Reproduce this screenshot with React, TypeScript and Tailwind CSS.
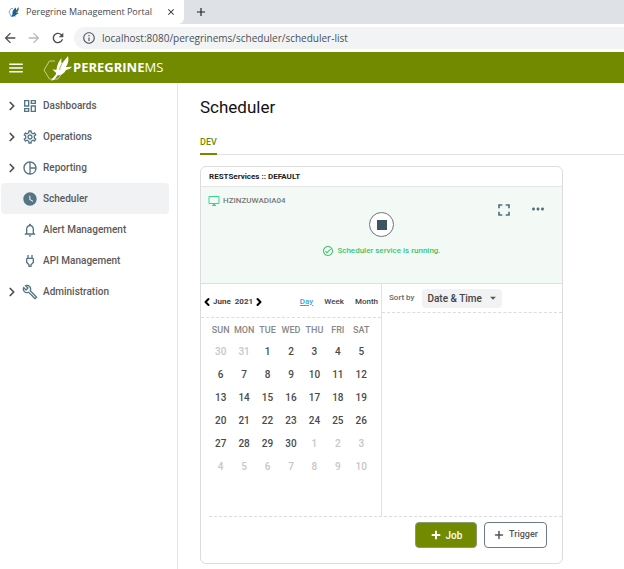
import { useState } from "react";
import type { IconType } from "react-icons";
import { ChevronLeft, ChevronRight, Plus } from "lucide-react";
import {
  MdAdd,
  MdArrowBack,
  MdArrowDropDown,
  MdArrowForward,
  MdClose,
  MdFullscreen,
  MdMenu,
  MdMoreHoriz,
  MdNotificationsNone,
  MdOutlineBuild,
  MdOutlineCheckCircle,
  MdOutlineDashboard,
  MdOutlineDesktopWindows,
  MdOutlineInfo,
  MdOutlinePieChart,
  MdOutlinePower,
  MdOutlineSettings,
  MdRefresh,
  MdWatchLater,
} from "react-icons/md";

const navItems: { label: string; icon: IconType; expandable?: boolean }[] = [
  { label: "Dashboards", icon: MdOutlineDashboard, expandable: true },
  { label: "Operations", icon: MdOutlineSettings, expandable: true },
  { label: "Reporting", icon: MdOutlinePieChart, expandable: true },
  { label: "Scheduler", icon: MdWatchLater },
  { label: "Alert Management", icon: MdNotificationsNone },
  { label: "API Management", icon: MdOutlinePower },
  { label: "Administration", icon: MdOutlineBuild, expandable: true },
];

const weekdays = ["SUN", "MON", "TUE", "WED", "THU", "FRI", "SAT"];

// June 2021 with the days around it
const weeks = [
  [30, 31, 1, 2, 3, 4, 5],
  [6, 7, 8, 9, 10, 11, 12],
  [13, 14, 15, 16, 17, 18, 19],
  [20, 21, 22, 23, 24, 25, 26],
  [27, 28, 29, 30, 1, 2, 3],
  [4, 5, 6, 7, 8, 9, 10],
];

function isOutside(week: number, day: number) {
  return (week === 0 && day > 7) || (week > 3 && day < 20);
}

function Favicon() {
  return (
    <svg viewBox="0 0 12 12" className="h-3 w-3 shrink-0">
      <path d="M5 2.5H3L1 6l2 4h5" fill="none" stroke="#7db4d8" />
      <path d="M10.5 1c.6 2.500-.2 4.500-2 6L11 7 8.500 8.500 6.500 10 3 11l1.500-2.500C4 6 5 3.500 8 1.500v3Z" fill="#1c5f96" />
      <path d="M10 3.500 8 7l1.500.3Z" fill="#8fae1b" />
    </svg>
  );
}

function Logo() {
  return (
    <svg viewBox="0 0 30 26" className="h-[26px] w-[30px] shrink-0">
      <path d="M12 6H6.500L1 15l5.500 9H15l3.500-5" fill="none" stroke="#c5d18f" />
      <path
        d="M25 1c1 4.500.2 8-2.300 11l6.300-.2c-1.500 2-3.500 2.800-6 3.200-2 4-5 5-8.500 5.500L11 25l-3 .5 3.500-4.500c1.200-1 1.700-1.800 1.500-3.200L9.500 14.500l4 .2C14 10.500 15.500 6.500 18.500 3c-.3 2.500-.2 4 .3 6C20.500 6.500 23 3.500 25 1Z"
        fill="#fff"
      />
      <path d="M18.800 9c-1.200 2-2 3.800-2.300 6" fill="none" stroke="#728a00" strokeWidth=".6" />
    </svg>
  );
}

function BrowserBar() {
  return (
    <div className="bg-white">
      <div className="flex h-6 bg-[#dee1e6]">
        <div className="flex w-[184px] items-center rounded-br-md bg-white pl-2 pr-2">
          <Favicon />
          <span className="ml-1.5 flex-1 whitespace-nowrap font-['Open_Sans'] text-[9px] text-[#45494d]">
            Peregrine Management Portal
          </span>
          <button type="button" aria-label="Close tab">
            <MdClose className="h-2.5 w-2.5 text-[#222]" />
          </button>
        </div>
        <button type="button" aria-label="New tab" className="px-2.5">
          <MdAdd className="h-3.5 w-3.5 text-[#222]" />
        </button>
      </div>
      <div className="flex h-7 items-center">
        <button type="button" aria-label="Back" className="ml-0.5">
          <MdArrowBack className="h-4 w-4 text-[#4b4f53]" />
        </button>
        <button type="button" aria-label="Forward" className="ml-2">
          <MdArrowForward className="h-4 w-4 text-[#b5b8bb]" />
        </button>
        <button type="button" aria-label="Reload" className="ml-2">
          <MdRefresh className="h-4 w-4 text-[#4b4f53]" />
        </button>
        <div className="ml-2 flex h-[22px] flex-1 items-center rounded-l-full bg-[#f1f3f4] pl-2">
          <MdOutlineInfo className="h-3.5 w-3.5 shrink-0 text-[#55595d]" />
          <input
            aria-label="Address"
            className="ml-1.5 w-full bg-transparent font-['Open_Sans'] text-[10px] text-[#4b4f54] outline-none"
            defaultValue="localhost:8080/peregrinems/scheduler/scheduler-list"
          />
        </div>
      </div>
    </div>
  );
}

function Sidebar() {
  return (
    <nav className="w-[178px] shrink-0 border-r border-[#e4e6e8] pt-[7px] pl-px pr-2">
      {navItems.map(({ label, icon: Icon, expandable }) => (
        <a
          key={label}
          href="#"
          className={
            label === "Scheduler"
              ? "flex h-[31px] items-center rounded bg-[#f1f2f3]"
              : "flex h-[31px] items-center"
          }
        >
          <span className="flex w-[21px] justify-center">
            {expandable && <ChevronRight className="h-3.5 w-3.5 text-[#4a4f53]" strokeWidth={3} />}
          </span>
          <Icon className="h-4 w-4 text-[#557585]" />
          <span className="ml-[5px] text-[10px] font-medium text-[#5a5a5a]">{label}</span>
        </a>
      ))}
    </nav>
  );
}

function ServiceStatus() {
  return (
    <div className="flex h-[97px] justify-between border-b border-[#cfe8d6] bg-[#f3faf5] px-[7px]">
      <div className="flex h-[27px] flex-1 items-center pr-2 text-[8px] font-medium text-[#777]">
        <MdOutlineDesktopWindows className="mr-[3px] h-3 w-3 text-[#36d68f]" />
        HZINZUWADIA04
      </div>
      <div className="flex flex-col items-center pt-[25px]">
        <button
          type="button"
          aria-label="Stop scheduler"
          className="flex h-[25px] w-[25px] items-center justify-center rounded-full border border-[#6b7680] bg-white"
        >
          <span className="h-2.5 w-2.5 bg-[#3c5464]" />
        </button>
        <div className="mt-2 flex items-center whitespace-nowrap text-[8px] font-medium text-[#3bc46d]">
          <MdOutlineCheckCircle className="mr-[3px] h-3 w-3" />
          Scheduler service is running.
        </div>
      </div>
      <div className="flex flex-1 items-start justify-end gap-[15px] pt-[13px] pr-2">
        <button type="button" aria-label="Full screen">
          <MdFullscreen className="h-5 w-5 text-[#50707f]" />
        </button>
        <button type="button" aria-label="More">
          <MdMoreHoriz className="h-[18px] w-[18px] text-[#50707f]" />
        </button>
      </div>
    </div>
  );
}

function Calendar() {
  const [view, setView] = useState("Day");

  return (
    <div className="w-[181px] shrink-0 border-r border-[#e2e2e2]">
      <div className="flex h-[34px] items-center border-b border-dashed border-[#dcdcdc] pt-[3px] pr-[3px] text-[8px] text-[#444]">
        <button type="button" aria-label="Previous month">
          <ChevronLeft className="h-3 w-3 text-black" strokeWidth={4} />
        </button>
        <span className="font-bold">June</span>
        <span className="ml-1 font-bold">2021</span>
        <button type="button" aria-label="Next month">
          <ChevronRight className="h-3 w-3 text-black" strokeWidth={4} />
        </button>
        <div className="ml-auto flex gap-[11px] font-medium">
          {["Day", "Week", "Month"].map((name) => (
            <button
              key={name}
              type="button"
              onClick={() => setView(name)}
              className={view === name ? "text-[#3ba3dc] underline" : ""}
            >
              {name}
            </button>
          ))}
        </div>
      </div>
      <table className="mx-2 mt-[3px] w-[164px] table-fixed text-center">
        <thead>
          <tr className="h-[19px] text-[9px] text-[#888]">
            {weekdays.map((day) => (
              <th key={day} className="p-0 font-medium">
                {day}
              </th>
            ))}
          </tr>
        </thead>
        <tbody>
          {weeks.map((week, i) => (
            <tr key={i} className="h-[23px] text-[10px] font-medium">
              {week.map((day) => (
                <td key={day} className={isOutside(i, day) ? "p-0 text-[#c6c6c6]" : "p-0 text-[#4a4a4a]"}>
                  {day}
                </td>
              ))}
            </tr>
          ))}
        </tbody>
      </table>
    </div>
  );
}

function JobList() {
  return (
    <div className="flex-1">
      <div className="flex h-[29px] items-center border-b border-dashed border-[#dcdcdc] pl-[7px]">
        <label htmlFor="sort" className="text-[8px] font-medium text-[#666]">
          Sort by
        </label>
        <div className="relative ml-2 flex items-center">
          <select
            id="sort"
            className="h-[19px] w-20 appearance-none rounded bg-[#f1f2f3] pl-[5px] text-[10px] font-medium text-[#444]"
          >
            <option>Date &amp; Time</option>
          </select>
          <MdArrowDropDown className="pointer-events-none absolute right-0.5 h-3.5 w-3.5 text-[#555]" />
        </div>
      </div>
    </div>
  );
}

export default function App() {
  return (
    <div className="flex min-h-screen flex-col bg-white font-['Roboto',sans-serif]">
      <BrowserBar />
      <header className="flex h-[31px] items-center bg-[#728a00] pl-[7px] text-white">
        <button type="button" aria-label="Menu">
          <MdMenu className="h-[18px] w-[18px]" />
        </button>
        <div className="ml-[18px] flex items-center">
          <Logo />
          <span className="font-['Open_Sans'] text-[13px] font-bold">
            PEREGRINE<span className="font-normal">MS</span>
          </span>
        </div>
      </header>
      <div className="flex flex-1">
        <Sidebar />
        <main className="min-w-0 flex-1 pl-[22px]">
          <h1 className="mt-3 text-[17px] leading-6 text-[#111]">Scheduler</h1>
          <div className="mt-3 flex border-b border-[#e2e2e2]">
            <button
              type="button"
              className="-mb-px h-6 border-b-2 border-[#728a00] pt-0.5 text-[9px] font-medium text-[#728a00]"
            >
              DEV
            </button>
          </div>
          <section className="mt-[11px] w-full max-w-[363px] rounded-md border border-[#dcdcdc]">
            <h2 className="flex h-5 items-center border-b border-[#e4e6e4] pl-2 text-[8px] font-bold text-[#222]">
              RESTServices :: DEFAULT
            </h2>
            <ServiceStatus />
            <div className="flex h-[232px]">
              <Calendar />
              <JobList />
            </div>
            <div className="ml-2 flex justify-end gap-[7px] border-t border-dashed border-[#dcdcdc] pt-[5px] pr-[15px] pb-[15px]">
              <button
                type="button"
                className="flex h-[26px] w-[62px] items-center justify-center gap-1 rounded border border-[#8c9a70] bg-[#728a00] text-[10px] font-medium text-white"
              >
                <Plus className="h-3 w-3" strokeWidth={4} />
                Job
              </button>
              <button
                type="button"
                className="flex h-[26px] w-[63px] items-center justify-center gap-1 rounded border border-[#6b7a86] text-[9px] font-medium text-[#555]"
              >
                <Plus className="h-3 w-3" strokeWidth={3} />
                Trigger
              </button>
            </div>
          </section>
        </main>
      </div>
    </div>
  );
}
